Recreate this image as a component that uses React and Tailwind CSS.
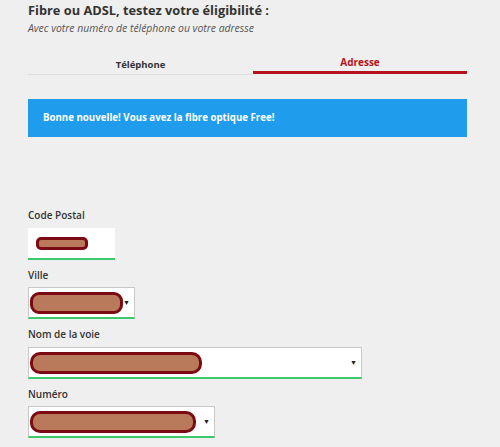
import React from "react";

const Redacted = ({ className }) => (
  <div
    className={`border-[3px] border-[#7c0a12] bg-[#b97a5c] ${className}`}
  />
);

const Arrow = () => (
  <span className="text-[7px] leading-none text-[#222]">▼</span>
);

function App() {
  return (
    <div
      className="min-h-[447px] w-[500px] bg-[#efefef] pl-[28px] text-[#333]"
      style={{ fontFamily: '"Open Sans", "Noto Sans", sans-serif' }}
    >
      <div className="w-[439px]">
        <h1 className="text-[12.8px] font-bold leading-[20px] text-[#333]">
          Fibre ou ADSL, testez votre éligibilité :
        </h1>
        <p className="mt-[1px] text-[10.4px] italic leading-[14px] text-[#555]">
          Avec votre numéro de téléphone ou votre adresse
        </p>

        {/* Tabs */}
        <div className="flex items-start">
          <button className="h-[40px] w-[225px] border-b border-[#dcdcdc] pt-[20px] text-[9.5px] font-bold leading-[14px] text-[#333]">
            Téléphone
          </button>
          <button className="h-[39px] flex-1 border-b-[3px] border-[#b5121b] pt-[17px] text-[10px] font-bold leading-[14px] text-[#b5121b]">
            Adresse
          </button>
        </div>

        {/* Message */}
        <div className="mt-[24px] flex h-[38px] items-center bg-[#1f9ceb] pl-[15px] text-[9.7px] font-bold text-white">
          Bonne nouvelle! Vous avez la fibre optique Free!
        </div>

        {/* Form */}
        <div className="mt-[71px] flex flex-col">
          <label className="text-[10px] font-semibold leading-[14px]">Code Postal</label>
          <div className="mt-[6px] flex h-[32px] w-[87px] items-center border-b-2 border-[#3cc96b] bg-white pl-[8px]">
            <Redacted className="h-[13px] w-[52px] rounded-[5px]" />
          </div>

          <label className="mt-[8px] text-[10px] font-semibold leading-[14px]">Ville</label>
          <div className="mt-[5px] flex h-[32px] w-[107px] items-center justify-between border border-b-2 border-[#c8c8c8] border-b-[#3cc96b] bg-white pl-[1px] pr-[4px]">
            <Redacted className="h-[22px] w-[96px] rounded-[9px]" />
            <Arrow />
          </div>

          <label className="mt-[8px] text-[10px] font-semibold leading-[14px]">Nom de la voie</label>
          <div className="mt-[6px] flex h-[32px] w-[334px] items-center justify-between border border-b-2 border-[#c8c8c8] border-b-[#3cc96b] bg-white pl-[1px] pr-[4px]">
            <Redacted className="h-[22px] w-[172px] rounded-[10px]" />
            <Arrow />
          </div>

          <label className="mt-[8px] text-[10px] font-semibold leading-[14px]">Numéro</label>
          <div className="mt-[5px] flex h-[32px] w-[187px] items-center justify-between border border-b-2 border-[#c8c8c8] border-b-[#3cc96b] bg-white pl-[1px] pr-[4px]">
            <Redacted className="h-[22px] w-[166px] rounded-[10px]" />
            <Arrow />
          </div>
        </div>
      </div>
    </div>
  );
}

export default App;
